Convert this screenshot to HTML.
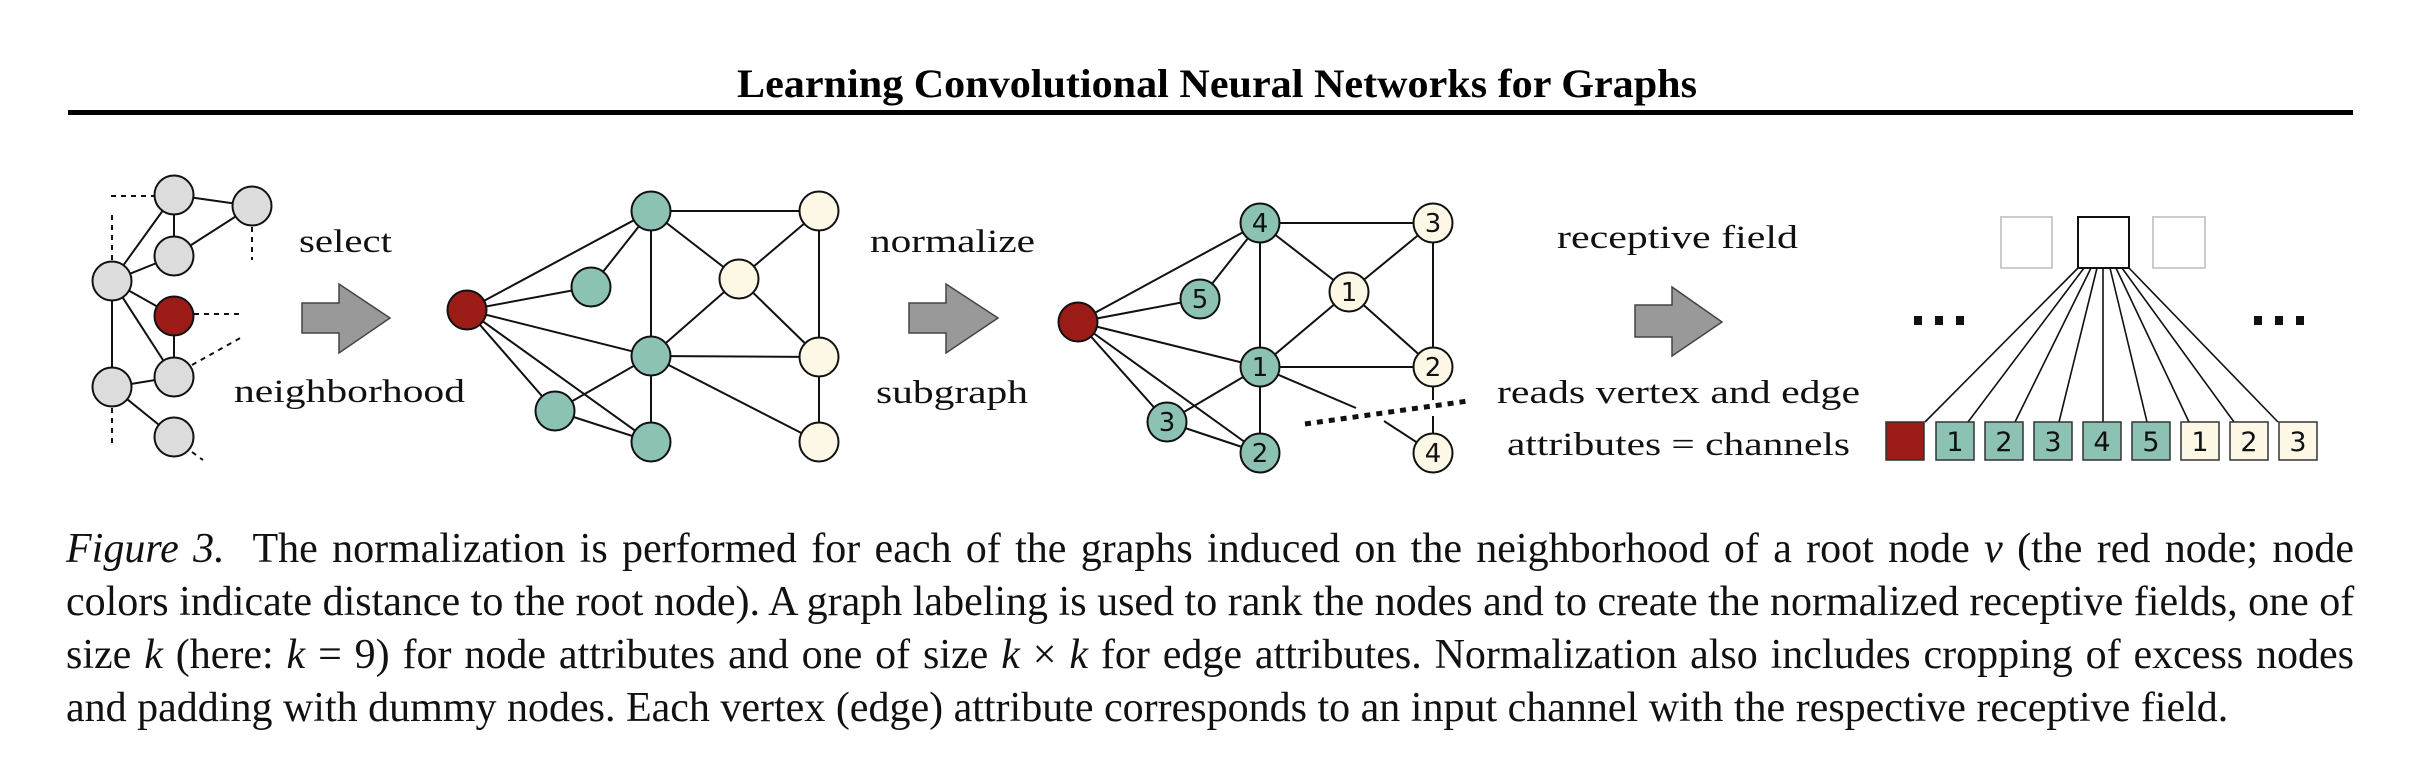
<!DOCTYPE html>
<html><head><meta charset="utf-8"><style>
html,body{margin:0;padding:0;background:#fff;}
body{width:2432px;height:780px;position:relative;overflow:hidden;}
svg{position:absolute;left:0;top:0;}
.cap{position:absolute;left:66px;top:523px;width:2288px;font-family:"Liberation Serif",serif;font-size:42px;line-height:53px;color:#111;}
.cap div{text-align:justify;text-align-last:justify;white-space:nowrap;}
.cap div.last{text-align-last:left;}
</style></head><body>
<svg width="2432" height="780" viewBox="0 0 2432 780" font-family="Liberation Serif, serif">
<text x="737" y="97" font-size="40" font-weight="bold" textLength="960" lengthAdjust="spacingAndGlyphs">Learning Convolutional Neural Networks for Graphs</text>
<rect x="68" y="110" width="2285" height="5" fill="#000"/>

<g stroke="#111" stroke-width="2" fill="none">
<line x1="174" y1="195" x2="252" y2="206"/><line x1="174" y1="195" x2="174" y2="256"/><line x1="252" y1="206" x2="174" y2="256"/>
<line x1="112" y1="281" x2="174" y2="195"/><line x1="112" y1="281" x2="174" y2="256"/><line x1="112" y1="281" x2="174" y2="316"/>
<line x1="112" y1="281" x2="174" y2="377"/><line x1="112" y1="281" x2="112" y2="387"/><line x1="174" y1="316" x2="174" y2="377"/>
<line x1="112" y1="387" x2="174" y2="377"/><line x1="112" y1="387" x2="174" y2="437"/>
</g>
<g stroke="#111" stroke-width="2" fill="none" stroke-dasharray="5,5">
<line x1="111" y1="196" x2="155" y2="196"/><line x1="112" y1="215" x2="112" y2="262"/><line x1="252" y1="227" x2="252" y2="260"/>
<line x1="194" y1="314" x2="242" y2="314"/><line x1="192" y1="365" x2="242" y2="337"/><line x1="112" y1="408" x2="112" y2="443"/><line x1="192" y1="452" x2="203" y2="460"/>
</g>
<g stroke="#111" stroke-width="2">
<circle cx="174" cy="195" r="19.5" fill="#dcdcdc"/><circle cx="252" cy="206" r="19.5" fill="#dcdcdc"/><circle cx="174" cy="256" r="19.5" fill="#dcdcdc"/>
<circle cx="112" cy="281" r="19.5" fill="#dcdcdc"/><circle cx="174" cy="316" r="19.5" fill="#9b1c16"/><circle cx="174" cy="377" r="19.5" fill="#dcdcdc"/>
<circle cx="112" cy="387" r="19.5" fill="#dcdcdc"/><circle cx="174" cy="437" r="19.5" fill="#dcdcdc"/>
</g>
<g font-size="33" fill="#111">
<text x="299" y="252" textLength="93" lengthAdjust="spacingAndGlyphs">select</text>
<text x="234" y="402" textLength="231" lengthAdjust="spacingAndGlyphs">neighborhood</text>
<text x="870" y="252" textLength="165" lengthAdjust="spacingAndGlyphs">normalize</text>
<text x="876" y="403" textLength="152" lengthAdjust="spacingAndGlyphs">subgraph</text>
<text x="1557" y="248" textLength="241" lengthAdjust="spacingAndGlyphs">receptive field</text>
<text x="1497" y="403" textLength="363" lengthAdjust="spacingAndGlyphs">reads vertex and edge</text>
<text x="1507" y="455" textLength="343" lengthAdjust="spacingAndGlyphs">attributes = channels</text>
</g>
<g fill="#999" stroke="#444" stroke-width="1.5">
<polygon points="302,303 339,303 339,284 390,318 339,353 339,333 302,333"/>
<polygon points="909,303 946,303 946,284 998,318 946,353 946,333 909,333"/>
<polygon points="1635,305 1672,305 1672,287 1722,322 1672,356 1672,337 1635,337"/>
</g>

<g stroke="#111" stroke-width="2">
<line x1="467" y1="310" x2="651" y2="211"/><line x1="467" y1="310" x2="591" y2="287"/><line x1="467" y1="310" x2="651" y2="356"/>
<line x1="467" y1="310" x2="555" y2="411"/><line x1="467" y1="310" x2="651" y2="442"/><line x1="651" y1="211" x2="591" y2="287"/>
<line x1="651" y1="211" x2="819" y2="211"/><line x1="651" y1="211" x2="651" y2="356"/><line x1="651" y1="211" x2="739" y2="279"/>
<line x1="819" y1="211" x2="739" y2="279"/><line x1="819" y1="211" x2="819" y2="357"/><line x1="739" y1="279" x2="651" y2="356"/>
<line x1="739" y1="279" x2="819" y2="357"/><line x1="651" y1="356" x2="819" y2="357"/><line x1="651" y1="356" x2="555" y2="411"/>
<line x1="651" y1="356" x2="651" y2="442"/><line x1="651" y1="356" x2="819" y2="442"/><line x1="819" y1="357" x2="819" y2="442"/>
<line x1="555" y1="411" x2="651" y2="442"/>
<circle cx="467" cy="310" r="19.5" fill="#9b1c16"/>
<circle cx="651" cy="211" r="19.5" fill="#8bc2b4"/><circle cx="591" cy="287" r="19.5" fill="#8bc2b4"/><circle cx="651" cy="356" r="19.5" fill="#8bc2b4"/>
<circle cx="555" cy="411" r="19.5" fill="#8bc2b4"/><circle cx="651" cy="442" r="19.5" fill="#8bc2b4"/>
<circle cx="819" cy="211" r="19.5" fill="#fdf8e6"/><circle cx="739" cy="279" r="19.5" fill="#fdf8e6"/><circle cx="819" cy="357" r="19.5" fill="#fdf8e6"/><circle cx="819" cy="442" r="19.5" fill="#fdf8e6"/>
</g>

<g stroke="#111" stroke-width="2">
<line x1="1078" y1="322" x2="1260" y2="223"/><line x1="1078" y1="322" x2="1200" y2="299"/><line x1="1078" y1="322" x2="1260" y2="367"/>
<line x1="1078" y1="322" x2="1167" y2="422"/><line x1="1078" y1="322" x2="1260" y2="453"/><line x1="1260" y1="223" x2="1200" y2="299"/>
<line x1="1260" y1="223" x2="1433" y2="223"/><line x1="1260" y1="223" x2="1260" y2="367"/><line x1="1260" y1="223" x2="1349" y2="292"/>
<line x1="1433" y1="223" x2="1349" y2="292"/><line x1="1433" y1="223" x2="1433" y2="367"/><line x1="1349" y1="292" x2="1260" y2="367"/>
<line x1="1349" y1="292" x2="1433" y2="367"/><line x1="1260" y1="367" x2="1433" y2="367"/><line x1="1260" y1="367" x2="1167" y2="422"/>
<line x1="1260" y1="367" x2="1260" y2="453"/><line x1="1167" y1="422" x2="1260" y2="453"/>
<line x1="1260" y1="367" x2="1356" y2="408"/><line x1="1384" y1="421" x2="1433" y2="453"/>
<line x1="1433" y1="367" x2="1433" y2="400"/><line x1="1433" y1="416" x2="1433" y2="453"/>
<line x1="1305" y1="424" x2="1468" y2="401" stroke-width="5" stroke-dasharray="6,6"/>
<circle cx="1078" cy="322" r="19.5" fill="#9b1c16"/>
<circle cx="1260" cy="223" r="19.5" fill="#8bc2b4"/><circle cx="1200" cy="299" r="19.5" fill="#8bc2b4"/><circle cx="1260" cy="367" r="19.5" fill="#8bc2b4"/>
<circle cx="1167" cy="422" r="19.5" fill="#8bc2b4"/><circle cx="1260" cy="453" r="19.5" fill="#8bc2b4"/>
<circle cx="1433" cy="223" r="19.5" fill="#fdf8e6"/><circle cx="1349" cy="292" r="19.5" fill="#fdf8e6"/><circle cx="1433" cy="367" r="19.5" fill="#fdf8e6"/><circle cx="1433" cy="453" r="19.5" fill="#fdf8e6"/>
</g>
<g font-family="DejaVu Sans, sans-serif" font-size="26" fill="#111" text-anchor="middle">
<text x="1260" y="232">4</text><text x="1200" y="308">5</text><text x="1260" y="376">1</text><text x="1167" y="431">3</text><text x="1260" y="462">2</text>
<text x="1433" y="232">3</text><text x="1349" y="301">1</text><text x="1433" y="376">2</text><text x="1433" y="462">4</text>
</g>

<rect x="2001" y="217" width="51" height="51" fill="#fff" stroke="#ccc" stroke-width="2"/>
<rect x="2078" y="217" width="51" height="51" fill="#fff" stroke="#111" stroke-width="2"/>
<rect x="2153" y="217" width="52" height="51" fill="#fff" stroke="#ccc" stroke-width="2"/>
<g stroke="#111" stroke-width="1.6">
<line x1="2078" y1="268" x2="1925" y2="422"/><line x1="2084" y1="268" x2="1968" y2="422"/><line x1="2091" y1="268" x2="2015" y2="422"/>
<line x1="2097" y1="268" x2="2059" y2="422"/><line x1="2103" y1="268" x2="2103" y2="422"/><line x1="2110" y1="268" x2="2147" y2="422"/>
<line x1="2116" y1="268" x2="2189" y2="422"/><line x1="2122" y1="268" x2="2234" y2="422"/><line x1="2129" y1="268" x2="2278" y2="422"/>
</g>
<g fill="#111">
<rect x="1914" y="316" width="8" height="9"/><rect x="1935" y="316" width="8" height="9"/><rect x="1956" y="316" width="8" height="9"/>
<rect x="2254" y="316" width="8" height="9"/><rect x="2275" y="316" width="8" height="9"/><rect x="2296" y="316" width="8" height="9"/>
</g>
<g stroke="#333" stroke-width="1.5">
<rect x="1886" y="422" width="38" height="38" fill="#9b1c16"/>
<rect x="1936" y="422" width="38" height="38" fill="#8bc2b4"/><rect x="1985" y="422" width="38" height="38" fill="#8bc2b4"/>
<rect x="2034" y="422" width="38" height="38" fill="#8bc2b4"/><rect x="2083" y="422" width="38" height="38" fill="#8bc2b4"/>
<rect x="2132" y="422" width="38" height="38" fill="#8bc2b4"/><rect x="2181" y="422" width="38" height="38" fill="#fdf8e6"/>
<rect x="2230" y="422" width="38" height="38" fill="#fdf8e6"/><rect x="2279" y="422" width="38" height="38" fill="#fdf8e6"/>
</g>
<g font-family="DejaVu Sans, sans-serif" font-size="27" fill="#111" text-anchor="middle">
<text x="1955" y="451">1</text><text x="2004" y="451">2</text><text x="2053" y="451">3</text><text x="2102" y="451">4</text>
<text x="2151" y="451">5</text><text x="2200" y="451">1</text><text x="2249" y="451">2</text><text x="2298" y="451">3</text>
</g>
</svg>
<div class="cap">
<div><i>Figure 3.</i>&nbsp; The normalization is performed for each of the graphs induced on the neighborhood of a root node <i>v</i> (the red node; node</div>
<div>colors indicate distance to the root node). A graph labeling is used to rank the nodes and to create the normalized receptive fields, one of</div>
<div>size <i>k</i> (here: <i>k</i> = 9) for node attributes and one of size <i>k</i> × <i>k</i> for edge attributes. Normalization also includes cropping of excess nodes</div>
<div class="last">and padding with dummy nodes. Each vertex (edge) attribute corresponds to an input channel with the respective receptive field.</div>
</div>
</body></html>
